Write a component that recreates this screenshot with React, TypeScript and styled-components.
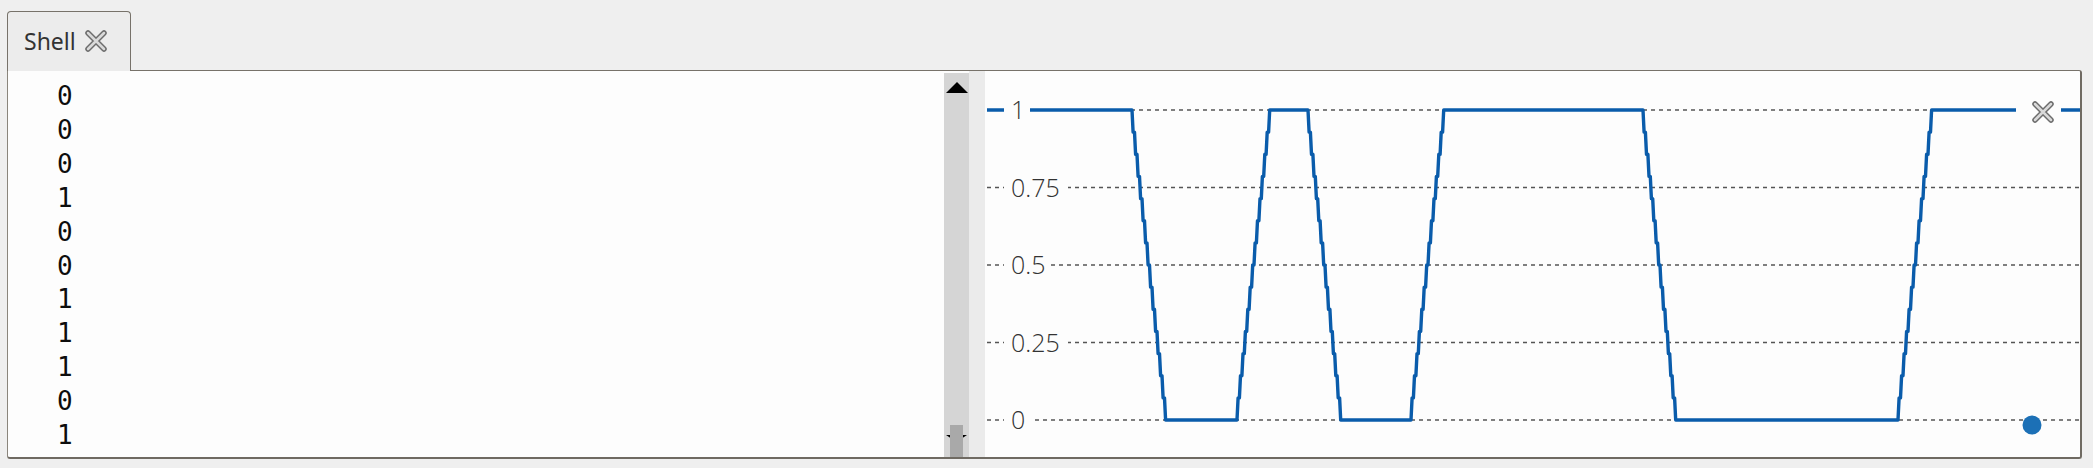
import React from "react";
import styled, { createGlobalStyle } from "styled-components";

const GlobalStyle = createGlobalStyle`
  html, body { margin: 0; padding: 0; background: #efefef; }
  #root { width: 2093px; height: 468px; overflow: hidden; }
`;

const Page = styled.div`
  width: 2093px;
  height: 468px;
  background: #efefef;
  display: flex;
  flex-direction: column;
  padding: 11px 11px 0 7px;
  box-sizing: border-box;
`;

const TabBar = styled.div`
  display: flex;
  align-items: flex-end;
  height: 59px;
  position: relative;
  z-index: 2;
`;

const Tab = styled.div`
  height: 60px;
  box-sizing: border-box;
  display: flex;
  align-items: center;
  gap: 8px;
  padding: 0 22px 2px 16px;
  background: #ececec;
  border: 1.5px solid #77726a;
  border-bottom: none;
  border-radius: 4px 4px 0 0;
  margin-bottom: -1px;
  font-family: "Noto Sans", "Open Sans", sans-serif;
  font-size: 23px;
  color: #333;
`;

const Panel = styled.div`
  flex: none;
  height: 389px;
  box-sizing: border-box;
  border-top: 1.5px solid #77726a;
  border-left: 1.5px solid #8a857c;
  border-right: 2px solid #6f6a62;
  border-bottom: 2px solid #6f6a62;
  border-radius: 0 3px 3px 3px;
  background: #fdfdfd;
  display: flex;
  overflow: hidden;
`;

const Output = styled.div`
  flex: 1;
  padding: 9px 0 0 49px;
  font-family: "DejaVu Sans Mono", "Liberation Mono", monospace;
  font-size: 26px;
  line-height: 33.9px;
  color: #0d0d0d;
  white-space: pre;
  overflow: hidden;
`;

const Scrollbar = styled.div`
  width: 25px;
  margin-top: 2px;
  background: #d5d5d5;
  display: flex;
  flex-direction: column;
  justify-content: space-between;
  align-items: center;
`;

const ArrowUp = styled.div`
  margin-top: 9px;
  width: 0;
  height: 0;
  border-left: 11.5px solid transparent;
  border-right: 11.5px solid transparent;
  border-bottom: 11px solid #000;
`;

const Gutter = styled.div`
  width: 16px;
  background: #ebebeb;
`;

const Plot = styled.svg`
  display: block;
  flex: none;
`;

const TabClose = () => (
  <svg width="24" height="24" viewBox="0 0 24 24">
    <path d="M4 4 L20 20 M20 4 L4 20" stroke="#6d6d6d" strokeWidth="5.5" strokeLinecap="round" fill="none" />
    <path d="M4 4 L20 20 M20 4 L4 20" stroke="#d9d9d9" strokeWidth="2.5" strokeLinecap="round" fill="none" />
  </svg>
);

const ScrollThumb = () => (
  <svg width="25" height="34" viewBox="0 0 25 34">
    <path d="M2 12 L23 12 L12.5 19 Z" fill="#000" />
    <rect x="6" y="2" width="13" height="32" fill="#a9a9a9" />
  </svg>
);

const values = ["0", "0", "0", "1", "0", "0", "1", "1", "1", "0", "1"];

const Y_TOP = 110;
const Y_BOT = 420;
const grid = [
  { y: 110, label: "1", w: 26 },
  { y: 187.5, label: "0.75", w: 64 },
  { y: 265, label: "0.5", w: 46 },
  { y: 342.5, label: "0.25", w: 64 },
  { y: 420, label: "0", w: 29 },
];

function stair(x0: number, y0: number, x1: number, y1: number, n = 14): string {
  let d = "";
  for (let i = 0; i < n; i++) {
    const xa = x0 + ((x1 - x0) * i) / n;
    const xb = x0 + ((x1 - x0) * (i + 1)) / n;
    const ya = y0 + ((y1 - y0) * i) / n;
    const yb = y0 + ((y1 - y0) * (i + 1)) / n;
    d += ` L${xa.toFixed(1)} ${ya.toFixed(1)} L${(xa + (xb - xa) * 0.45).toFixed(1)} ${yb.toFixed(1)} L${xb.toFixed(1)} ${yb.toFixed(1)}`;
  }
  return d;
}

const transitions: [number, number, boolean][] = [
  [1132, 1167, false],
  [1237, 1271, true],
  [1308, 1342, false],
  [1411, 1445, true],
  [1643, 1677, false],
  [1898, 1933, true],
];

function buildPath(): string {
  let d = `M987 ${Y_TOP}`;
  for (const [a, b, up] of transitions) {
    const ya = up ? Y_BOT : Y_TOP;
    const yb = up ? Y_TOP : Y_BOT;
    d += ` L${a} ${ya}` + stair(a, ya, b, yb);
  }
  d += ` L2080 ${Y_TOP}`;
  return d;
}

export default function App() {
  return (
    <>
      <GlobalStyle />
      <Page>
        <TabBar>
          <Tab>
            <span>Shell</span>
            <TabClose />
          </Tab>
        </TabBar>
        <Panel>
          <Output>{values.join("\n")}</Output>
          <Scrollbar>
            <ArrowUp />
            <ScrollThumb />
          </Scrollbar>
          <Gutter />
          <Plot width={1095} height={387} viewBox="985 71 1095 387">
            <rect x="985" y="71" width="1095" height="387" fill="#fdfdfd" />
            {grid.map((g) => (
              <line key={g.label} x1="987" x2="2080" y1={g.y} y2={g.y} stroke="#555" strokeWidth="1.3" strokeDasharray="4 4" />
            ))}
            <path d={buildPath()} fill="none" stroke="#0a5cab" strokeWidth="3.4" strokeLinejoin="round" />
            {grid.map((g) => (
              <g key={"l" + g.label}>
                <rect x="1004" y={g.y - 14} width={g.w} height="28" fill="#fdfdfd" />
                <text
                  x="1011"
                  y={g.y + 9}
                  fontFamily="'Open Sans', 'Noto Sans', sans-serif"
                  fontWeight={300}
                  fontSize="25"
                  fill="#333"
                >
                  {g.label}
                </text>
              </g>
            ))}
            <rect x="2016" y="98" width="45" height="26" fill="#fdfdfd" />
            <g transform="translate(2031 100)">
              <path d="M4 4 L20 20 M20 4 L4 20" stroke="#6d6d6d" strokeWidth="5.5" strokeLinecap="round" fill="none" />
              <path d="M4 4 L20 20 M20 4 L4 20" stroke="#d9d9d9" strokeWidth="2.5" strokeLinecap="round" fill="none" />
            </g>
            <circle cx="2032" cy="425" r="9.5" fill="#1c70b6" />
          </Plot>
        </Panel>
      </Page>
    </>
  );
}
